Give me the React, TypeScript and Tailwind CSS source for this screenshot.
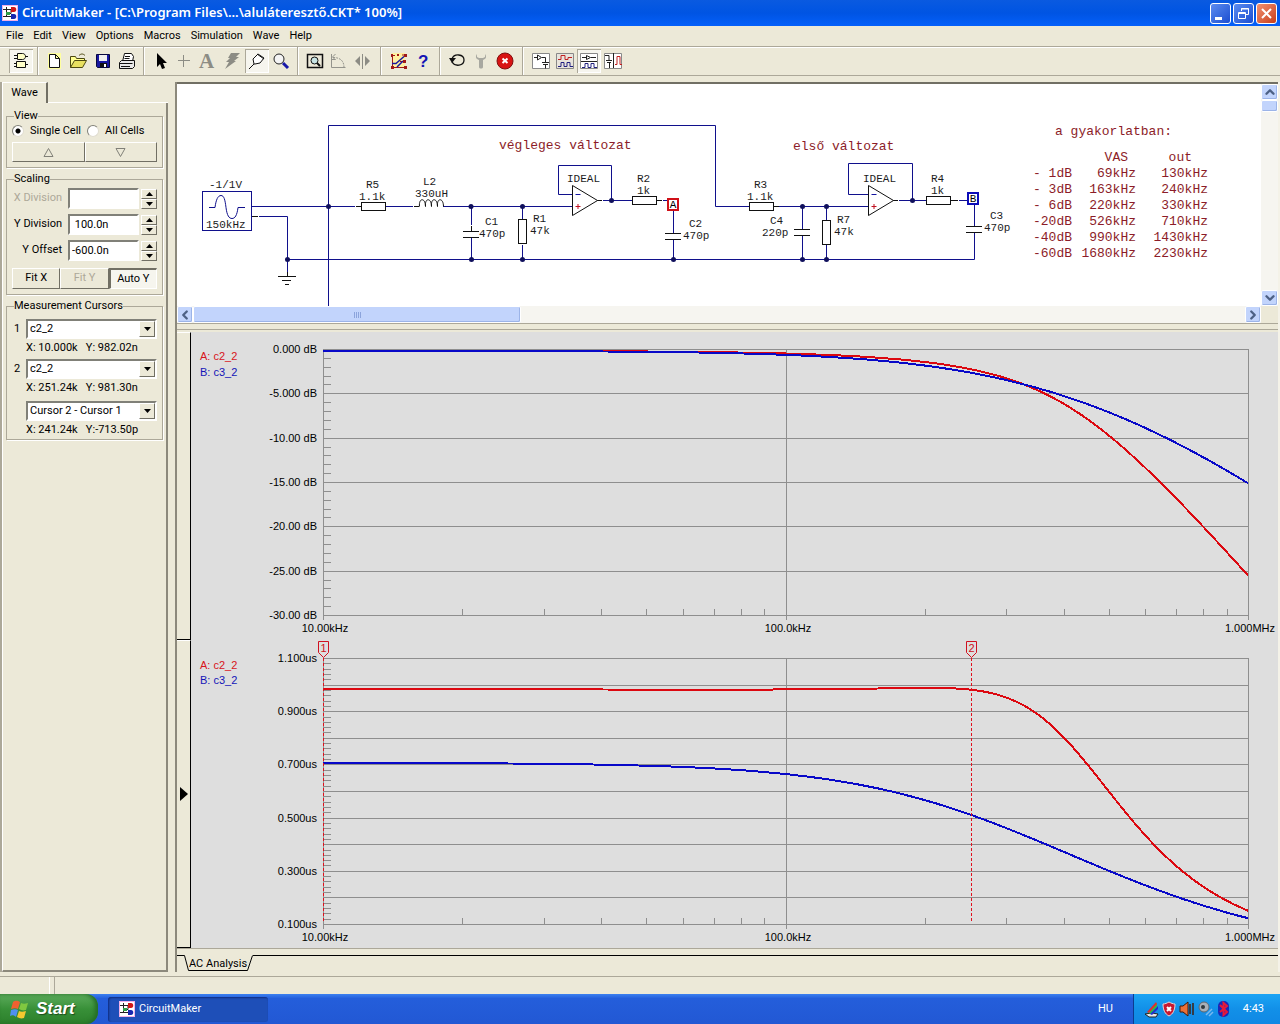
import React, { useState } from 'react';
import { ChevronDown, ChevronLeft, ChevronRight, ChevronUp } from 'lucide-react';

/* ---------- circuit maths ---------- */

type Filter = { r: number; l: number; c: number };

const R_LOAD = 47e3;
const R_OUT = 1e3;
const C_OUT = 470e-12;

const filterA: Filter = { r: 1100, l: 330e-6, c: 470e-12 };
const filterB: Filter = { r: 1100, l: 0, c: 220e-12 };

const denominator = ({ r, l, c }: Filter, w: number) => ({
  re: 1 + r / R_LOAD - w * w * l * c,
  im: w * (r * c + l / R_LOAD),
});

const gainDb = (f: Filter, hz: number) => {
  const w = 2 * Math.PI * hz;
  const d = denominator(f, w);
  return -20 * Math.log10(Math.hypot(d.re, d.im) * Math.hypot(1, w * R_OUT * C_OUT));
};

const phase = (f: Filter, w: number) => {
  const d = denominator(f, w);
  return Math.atan2(d.im, d.re) + Math.atan(w * R_OUT * C_OUT);
};

// group delay in microseconds
const delayUs = (f: Filter, hz: number) => {
  const w = 2 * Math.PI * hz;
  const dw = w * 0.001;
  return ((phase(f, w + dw) - phase(f, w - dw)) / (2 * dw)) * 1e6;
};

/* ---------- plots ---------- */

const LEFT = 132;
const WIDTH = 925;
const HEIGHT = 266;

const freqToX = (hz: number) => LEFT + (Math.log10(hz / 1e4) / 2) * WIDTH;

type PlotProps = {
  top: number;
  legendY: number[];
  labels: string[];
  rows: number;
  minor: number;
  max: number;
  min: number;
  value: (f: Filter, hz: number) => number;
  cursors?: { id: string; hz: number }[];
};

function Plot({ top, legendY, labels, rows, minor, max, min, value, cursors = [] }: PlotProps) {
  const bottom = top + HEIGHT;
  const rowY = (i: number, n: number) => Math.round(top + (i * HEIGHT) / n) + 0.5;

  const trace = (f: Filter) =>
    Array.from({ length: 186 }, (_, i) => {
      const hz = 1e4 * Math.pow(10, (i / 185) * 2);
      const y = top + ((max - value(f, hz)) / (max - min)) * HEIGHT;
      return `${freqToX(hz).toFixed(1)},${y.toFixed(1)}`;
    }).join(' ');

  const ticks = [1e4, 1e5].flatMap((d) => [2, 3, 4, 5, 6, 7, 8, 9].map((k) => d * k));
  const dashes = Array.from({ length: Math.floor(HEIGHT / 5) }, (_, i) => top + i * 5);

  return (
    <svg viewBox="0 0 1087 308" className="block w-full bg-[#dedede] font-['Liberation_Sans',Arial,sans-serif] text-[11px]">
      <text x="9" y={legendY[0]} fill="#d8141c">A: c2_2</text>
      <text x="9" y={legendY[1]} fill="#1414b8">B: c3_2</text>

      <g stroke="#8e8e8e" fill="none" shapeRendering="crispEdges">
        {Array.from({ length: rows + 1 }, (_, i) => (
          <path key={i} d={`M${LEFT} ${rowY(i, rows)}H${LEFT + WIDTH}`} />
        ))}
        {Array.from({ length: rows * minor }, (_, i) => (
          <path key={i} d={`M${LEFT} ${rowY(i, rows * minor)}h8`} />
        ))}
        {[0, 463, WIDTH].map((x) => (
          <path key={x} d={`M${LEFT + x + 0.5} ${top}V${bottom + 5}`} />
        ))}
        {ticks.map((hz) => (
          <path key={hz} d={`M${Math.round(freqToX(hz)) + 0.5} ${bottom}v-6`} />
        ))}
      </g>

      {labels.map((label, i) => (
        <text key={label} x="126" y={rowY(i, labels.length - 1) + 3.5} textAnchor="end">{label}</text>
      ))}
      <text x="134" y={bottom + 17} textAnchor="middle">10.00kHz</text>
      <text x="597" y={bottom + 17} textAnchor="middle">100.0kHz</text>
      <text x="1059" y={bottom + 17} textAnchor="middle">1.000MHz</text>

      <polyline points={trace(filterA)} fill="none" stroke="#dc0810" strokeWidth="2" shapeRendering="crispEdges" />
      <polyline points={trace(filterB)} fill="none" stroke="#0808c8" strokeWidth="2" shapeRendering="crispEdges" />

      {cursors.map(({ id, hz }) => {
        const x = Math.round(freqToX(hz));
        return (
          <g key={id}>
            {dashes.map((y) => (
              <rect key={y} x={x} y={y} width="1" height="3" fill="#e0101c" />
            ))}
            <path d={`M${x - 4.5} ${top - 16.5}h10v11l-5 5l-5-5z`} fill="none" stroke="#d01020" />
            <text x={x + 0.5} y={top - 6} textAnchor="middle" fill="#d01020">{id}</text>
          </g>
        );
      })}
    </svg>
  );
}

/* ---------- schematic ---------- */

const schematicLabels: [number, number, string][] = [
  [209, 188, '-1/1V'], [206, 228, '150kHz'],
  [366, 188, 'R5'], [359, 200, '1.1k'],
  [423, 185, 'L2'], [415, 197, '330uH'],
  [485, 225, 'C1'], [479, 237, '470p'],
  [533, 222, 'R1'], [530, 234, '47k'],
  [567, 182, 'IDEAL'], [637, 182, 'R2'], [637, 194, '1k'],
  [689, 227, 'C2'], [683, 239, '470p'],
  [754, 188, 'R3'], [747, 200, '1.1k'],
  [770, 224, 'C4'], [762, 236, '220p'],
  [837, 223, 'R7'], [834, 235, '47k'],
  [863, 182, 'IDEAL'], [931, 182, 'R4'], [931, 194, '1k'],
  [990, 219, 'C3'], [984, 231, '470p'],
];

const nodes: [number, number][] = [
  [328.5, 206.5], [471, 206.5], [522.5, 206.5], [802.5, 206.5], [826.5, 206.5],
  [611.5, 200.5], [912.5, 200.5], [287.5, 259.5], [471.5, 259.5], [522.5, 259.5],
  [673.5, 259.5], [802.5, 259.5], [826.5, 259.5],
];

function OpAmp({ x }: { x: number }) {
  return (
    <g fill="none">
      <path d={`M${x} 185.5v30l25-15z`} stroke="#111" fill="#fff" />
      <path d={`M${x + 3} 194.5h5`} stroke="#1414a0" />
      <path d={`M${x + 3} 206.5h5M${x + 5.5} 204v5`} stroke="#c01020" />
    </g>
  );
}

function Schematic() {
  return (
    <svg viewBox="177 84 1084 222" className="block h-[222px] w-[1084px] shrink-0 font-['Liberation_Mono','Courier_New',monospace] text-[11px]">
      <g fill="none" stroke="#10108c">
        <path d="M328.5 306V125.5H715.5V206.5H749" />
        <path d="M251 206.5H355M386 206.5H413M443 206.5H572M774 206.5H868" />
        <path d="M259 216.5H287.5V259.5H974.5V233M287.5 259V273" />
        <path d="M471.5 206V225M471.5 238V259M522.5 206V219M522.5 245V259" />
        <path d="M572 194.5H558.5V165.5H611.5V200.5M603 200.5H632M663 200.5h5" />
        <path d="M673.5 210V233M673.5 240V259M802.5 206V229M802.5 236V259M826.5 206V220M826.5 245V259" />
        <path d="M868 194.5H848.5V163.5H912.5V200.5M899 200.5H926M959 200.5h8M974.5 205V226" />
        <rect x="202.5" y="191.5" width="49" height="39" />
        <path d="M209 207.5h6c1-8 3-12 6-12s4 4 5 12s3 11 6 11s5-3 6-11h7" />
      </g>
      <g fill="none" stroke="#111">
        <path d="M252 216.5h6M356 206.5h5M414 206.5h5M597 200.5h5M656 200.5h6M893 200.5h5M951 200.5h7M774 206.5h5" />
        <path d="M419.5 206.5c-1-9 6-9 6 0c-1-9 6-9 6 0c-1-9 6-9 6 0c-1-9 6-9 6 0" />
        <path d="M471.5 226v5M463 231.5h16M463 237.5h16M665 233.5h16M665 239.5h16M794 229.5h16M794 235.5h16M966 226.5h16M966 232.5h16" />
        <path d="M287.5 272v4M278 276.5h18M282 280.5h9M285 284.5h4" />
        <g fill="#fff">
          <rect x="361.5" y="202.5" width="24" height="8" />
          <rect x="632.5" y="196.5" width="24" height="8" />
          <rect x="749.5" y="202.5" width="24" height="8" />
          <rect x="926.5" y="196.5" width="24" height="8" />
          <rect x="518.5" y="219.5" width="8" height="24" />
          <rect x="822.5" y="220.5" width="8" height="24" />
        </g>
      </g>
      <OpAmp x={572.5} />
      <OpAmp x={868.5} />
      {nodes.map(([x, y]) => (
        <circle key={`${x}-${y}`} cx={x} cy={y} r="2.5" fill="#10105c" />
      ))}
      <g strokeWidth="2" fill="#fff">
        <rect x="668" y="199" width="10" height="11" stroke="#d01018" />
        <rect x="968" y="193" width="10" height="11" stroke="#0c0cb8" />
      </g>
      <g textAnchor="middle">
        <text x="673" y="208">A</text>
        <text x="973" y="202">B</text>
      </g>
      <g fill="#1c1c1c">
        {schematicLabels.map(([x, y, label]) => (
          <text key={`${x}-${y}`} x={x} y={y}>{label}</text>
        ))}
      </g>
      <g fill="#8c1c28" className="text-[13px]">
        <text x="499" y="149">végleges változat</text>
        <text x="793" y="150">első változat</text>
        <text x="1055" y="135">a gyakorlatban:</text>
      </g>
    </svg>
  );
}

const measured = [
  ['- 1dB', '69kHz', '130kHz'],
  ['- 3dB', '163kHz', '240kHz'],
  ['- 6dB', '220kHz', '330kHz'],
  ['-20dB', '526kHz', '710kHz'],
  ['-40dB', '990kHz', '1430kHz'],
  ['-60dB', '1680kHz', '2230kHz'],
];

function MeasuredTable() {
  return (
    <table className="absolute top-[66px] left-[851px] text-right font-['Liberation_Mono','Courier_New',monospace] text-[13px] leading-4 whitespace-pre text-[#8c1c28]">
      <thead>
        <tr>
          <th className="w-11" />
          <th className="w-16 p-0 pr-2 font-normal">VAS</th>
          <th className="w-[72px] p-0 pr-4 font-normal">out</th>
        </tr>
      </thead>
      <tbody>
        {measured.map(([level, vas, out]) => (
          <tr key={level}>
            <td className="p-0">{level}</td>
            <td className="p-0">{vas}</td>
            <td className="p-0">{out}</td>
          </tr>
        ))}
      </tbody>
    </table>
  );
}

/* ---------- icons ---------- */

function AppIcon() {
  return (
    <svg viewBox="0 0 16 16" className="size-4 shrink-0">
      <path d="M0 0h16v16H0z" fill="#f0b0e8" />
      <path d="M1 1h14v14H1z" fill="#fff" />
      <path d="M1 4.500h8M4.500 2v10M1 11.500h8M9 4.500v4H5" stroke="#222" fill="none" />
      <path d="M9 2h3c3 0 3 5 0 5H9z" fill="#d01818" />
      <path d="M9 9h3c3 0 3 5 0 5H9z" fill="#1828b0" />
      <path d="M4 7h4v3H4z" fill="#30a048" />
    </svg>
  );
}

const icons: Record<string, React.ReactNode> = {
  Devices: (
    <g fill="#ffffc8" stroke="#111">
      <path d="M8.500 4.500h5c4 0 4 6 0 6h-5zM5 6.500h3M5 9.500h3M16 7.500h3M7.500 12.500h9v6h-9zM5 14.500h2M5 17.500h2M17 15.500h2" />
    </g>
  ),
  New: (
    <>
      <path d="M5 4h13v16H5z" fill="#ffffa0" />
      <path d="M6.500 5.500h6l4 4v9h-10zM12.500 5.500v4h4" fill="#fff" stroke="#111" />
    </>
  ),
  Open: (
    <g stroke="#4c4810">
      <path d="M3.500 18.500v-11h5l1 2h8v2" fill="#ffff90" />
      <path d="M3.500 18.500l4-7h12l-4 7z" fill="#e8e060" />
      <path d="M12 6.500c2-2 4-2 6 0" fill="none" />
    </g>
  ),
  Save: (
    <>
      <path d="M5.500 5.500h13v13h-12l-1-1z" fill="#1818a0" stroke="#080840" />
      <path d="M8 6h8v6H8z" fill="#f0f0f0" />
      <path d="M9 14h7v4H9z" fill="#111" />
      <path d="M13 15h2v3h-2z" fill="#fff" />
    </>
  ),
  Print: (
    <g stroke="#111" fill="#e8e8e8">
      <path d="M7.500 12.500l2-8h7l2 3-1 5z" fill="#fff" />
      <path d="M10 7.500h5M9.500 9.500h5" />
      <path d="M4.500 13.500l2-2h13v6l-2 2h-13zM4.500 14.500h13M6 17.500h9" />
    </g>
  ),
  Select: <path d="M8 4v14l3-3 2 5 3-1-2-5h4z" fill="#000" />,
  Wire: <path d="M10.500 6v12M5 11.500h12" stroke="#8c8c84" fill="none" />,
  Text: (
    <text x="2" y="19" fill="#8c8c84" fontWeight="bold" className="font-['Liberation_Serif',serif] text-[21px]">A</text>
  ),
  Delete: <path d="M10 4h9l-4 4h3l-5 4h2l-11 8 4-7H5l4-4H7z" fill="#8c8c84" />,
  Probe: (
    <g stroke="#111" fill="#fff">
      <path d="M4 20l5-5M9 15l-1-5 5-5 6 4-4 5-5 1zM12 5l7 5" />
    </g>
  ),
  Magnify: (
    <>
      <circle cx="10" cy="10" r="5" fill="#f4f4f4" stroke="#222" />
      <path d="M14 14l5 5" stroke="#1818a8" strokeWidth="3" />
    </>
  ),
  Fit: (
    <g fill="none" stroke="#111">
      <path d="M4.500 5.500h15v13h-15z" strokeWidth="1.5" />
      <circle cx="11.500" cy="11.500" r="3.500" fill="#c8e4e4" />
      <path d="M14 14l3 3" strokeWidth="2" />
    </g>
  ),
  Rotate: (
    <g fill="none" stroke="#94948c">
      <path d="M4.500 5v13.500h14M4.500 10.500h4M8.500 5l-3 3 3 3" />
      <path d="M6 8.500c8 0 11 4 11 10" strokeDasharray="2 1" />
    </g>
  ),
  Mirror: (
    <>
      <path d="M9 7v10l-5-5zM14 7v10l5-5z" fill="#8c8c84" />
      <path d="M11.500 5v15" stroke="#8c8c84" />
    </>
  ),
  Trace: (
    <>
      <path d="M5 4h13v14H5z" fill="#fff0a0" />
      <path d="M4 6.500h4M5.500 6v12M15 6h4M9 18.500h10M5 18.500h4M13 12.500h5" stroke="#a01818" fill="none" />
      <path d="M5 14.500h4l8-7M10 18l6-6" stroke="#1818a0" strokeWidth="1.5" fill="none" />
      <path d="M4 5h2v3H4zM17 5h3v3h-3zM16 11h3v3h-3zM17 17h3v3h-3zM4 17h3v3H4zM10 5h2v2h-2z" fill="#a01818" />
    </>
  ),
  Help: (
    <text x="7" y="18" fill="#1414b4" fontWeight="bold" className="font-['Liberation_Sans',sans-serif] text-[17px]">?</text>
  ),
  Reset: (
    <>
      <path d="M7 10c2-6 12-5 12 1c0 6-9 7-12 2" fill="none" stroke="#111" strokeWidth="1.3" />
      <path d="M4 9h7l-4 5z" fill="#111" />
    </>
  ),
  Options: (
    <path d="M8 5c-2 3-1 5 2 6v7c0 2 4 2 4 0v-7c3-1 4-3 2-6v3l-2 1h-4L8 8z" fill="#a8a8a0" />
  ),
  Stop: (
    <>
      <circle cx="12" cy="12" r="8" fill="#d81414" stroke="#801010" />
      <path d="M9.500 9.500l5 4.500M14.500 9.500l-5 4.500" stroke="#fff" strokeWidth="2" />
    </>
  ),
  Circuit: (
    <g fill="#fff" stroke="#222">
      <path d="M3.500 4.500h17v15h-17z" stroke="#888" />
      <path d="M5 8.500h3M8.500 6v5l4-2.500zM13 8.500h3.500v5M13 13.500h7M14 15.500h5M16.500 15.500v4" />
    </g>
  ),
  Waveforms: (
    <g fill="none">
      <path d="M3.500 4.500h17v15h-17z" stroke="#888" fill="#e8e4dc" />
      <path d="M5 10.500h3v-4h4v4h3v-2h4" stroke="#c02020" />
      <path d="M5 17.500h3v-4h3v4h3v-4h3v4h3" stroke="#202080" />
    </g>
  ),
  'Split horizontal': (
    <g fill="none" stroke="#222">
      <path d="M3.500 4.500h17v15h-17z" stroke="#888" fill="#fff" />
      <path d="M4 12.500h16M5 8.500h4M9.500 6.500v4l4-2zM14 8.500h5" />
      <path d="M5 18.500h3v-4h3v4h3v-4h3v4h3" stroke="#202080" />
    </g>
  ),
  'Split vertical': (
    <g fill="none" stroke="#222">
      <path d="M3.500 4.500h17v15h-17z" stroke="#888" fill="#fff" />
      <path d="M12.500 4v15M4 6.500h4v5M5 11.500h6M6 13.500h4M8.500 13v6" />
      <path d="M14 15.500h2v-8h3v8h2" stroke="#c02020" />
    </g>
  ),
};

const toolbarGroups: { names: string[]; sep: string }[] = [
  { names: ['Devices'], sep: 'w-2.5' },
  { names: ['New', 'Open', 'Save', 'Print'], sep: 'w-2.5' },
  { names: ['Select', 'Wire', 'Text', 'Delete', 'Probe', 'Magnify'], sep: 'w-2.5' },
  { names: ['Fit', 'Rotate', 'Mirror'], sep: 'w-3' },
  { names: ['Trace', 'Help'], sep: 'w-2.5' },
  { names: ['Reset', 'Options', 'Stop'], sep: 'w-3' },
  { names: ['Circuit', 'Waveforms', 'Split horizontal', 'Split vertical'], sep: '' },
];

const pressed = ['Devices', 'Probe', 'Split horizontal'];

/* ---------- window chrome ---------- */

const menu = ['File', 'Edit', 'View', 'Options', 'Macros', 'Simulation', 'Wave', 'Help'];

const uiFont = "font-['Roboto',Tahoma,sans-serif]";
const raised = 'border border-t-white border-l-white border-r-[#716f64] border-b-[#716f64] bg-[#ece9d8]';
const sunken = 'border-2 border-t-[#808078] border-l-[#808078] border-r-white border-b-white';

function TitleBar() {
  return (
    <header className="flex h-[26px] items-center bg-linear-to-b from-[#0a5ae0] via-[#0054e3] to-[#0560fa] pr-[3px] pl-0.5">
      <AppIcon />
      <h1 className="ml-1 flex-1 font-['Noto_Sans',sans-serif] text-[13px] font-semibold whitespace-pre text-white">
        CircuitMaker - [C:\Program Files\...\aluláteresztő.CKT* 100%]
      </h1>
      <div className="flex gap-0.5">
        <button aria-label="Minimize" className="size-[21px] rounded-[3px] border border-white bg-linear-to-br from-[#5c8cf0] to-[#1c4cd0]">
          <svg viewBox="0 0 19 19"><path d="M4 13h7v3H4z" fill="#fff" /></svg>
        </button>
        <button aria-label="Restore" className="size-[21px] rounded-[3px] border border-white bg-linear-to-br from-[#5c8cf0] to-[#1c4cd0]">
          <svg viewBox="0 0 19 19" fill="none" stroke="#fff">
            <path d="M7.500 7V4.500h7v6H12M7 5h8M4.500 8.500h7v6h-7zM4 9.500h8" />
          </svg>
        </button>
        <button aria-label="Close" className="size-[21px] rounded-[3px] border border-white bg-linear-to-br from-[#f09070] to-[#c83c14]">
          <svg viewBox="0 0 19 19"><path d="M5 5l9 9M14 5l-9 9" stroke="#fff" strokeWidth="2" /></svg>
        </button>
      </div>
    </header>
  );
}

function Toolbar() {
  return (
    <div className="flex h-[30px] items-center border-t border-b border-t-[#aca899] border-b-[#aca899] pl-[9px] shadow-[inset_0_1px_0_#fff]">
      {toolbarGroups.map(({ names, sep }) => (
        <React.Fragment key={names[0]}>
          {names.map((name) => (
            <button
              key={name}
              aria-label={name}
              className={`size-6 ${pressed.includes(name) ? 'bg-[#f6f5ee] shadow-[inset_1px_1px_0_#aca899,inset_-1px_-1px_0_#fff]' : ''}`}
            >
              <svg viewBox="0 0 24 24" className="size-6">{icons[name]}</svg>
            </button>
          ))}
          {sep && (
            <div className={`${sep} flex h-7 justify-center`}>
              <div className="w-0.5 border-r border-l border-r-white border-l-[#aca899]" />
            </div>
          )}
        </React.Fragment>
      ))}
    </div>
  );
}

/* ---------- side panel ---------- */

function Group({ title, children }: { title: string; children: React.ReactNode }) {
  return (
    <fieldset className="mx-[3px] mb-[5px] min-w-0 border border-[#aca899] px-[5px] pb-[5px] shadow-[1px_1px_0_#fff] last:pb-0">
      <legend className="ml-0.5 leading-3">{title}</legend>
      {children}
    </fieldset>
  );
}

function Spinner({ label, value, disabled }: { label: string; value: string; disabled?: boolean }) {
  const id = label.replace(' ', '-').toLowerCase();
  return (
    <div className="flex h-[21px] items-center">
      <label htmlFor={id} className={`flex-1 pr-1.5 text-right whitespace-nowrap ${disabled ? 'text-[#aca899]' : ''}`}>{label}</label>
      <input id={id} defaultValue={value} disabled={disabled} className={`h-[21px] w-[71px] shrink-0 bg-white px-0.5 ${sunken}`} />
      <div className="ml-0.5 flex w-4 shrink-0 flex-col">
        <button aria-label={`${label} up`} className={`flex h-2.5 items-center justify-center ${raised}`}>
          <svg viewBox="0 0 7 4" className="h-1 w-[7px]"><path d="M0 4h7L3.500 0z" /></svg>
        </button>
        <button aria-label={`${label} down`} className={`flex h-2.5 items-center justify-center ${raised}`}>
          <svg viewBox="0 0 7 4" className="h-1 w-[7px]"><path d="M0 0h7L3.500 4z" /></svg>
        </button>
      </div>
    </div>
  );
}

function Combo({ label, options }: { label: string; options: string[] }) {
  return (
    <div className="relative flex-1">
      <select aria-label={label} className={`block h-5 w-full appearance-none bg-white pl-0.5 ${sunken}`}>
        {options.map((o) => <option key={o}>{o}</option>)}
      </select>
      <span className={`pointer-events-none absolute top-0.5 right-0.5 flex h-4 w-4 items-center justify-center ${raised}`}>
        <svg viewBox="0 0 7 4" className="h-1 w-[7px]"><path d="M0 0h7L3.500 4z" /></svg>
      </span>
    </div>
  );
}

function Readout({ children }: { children: string }) {
  return <p className="pl-3.5 leading-[18px] whitespace-pre">{children}</p>;
}

function SidePanel() {
  const [cell, setCell] = useState('Single Cell');

  return (
    <aside className={`flex w-[168px] shrink-0 flex-col border-l-2 border-l-[#aca899] text-[11px] ${uiFont}`}>
      <div className="flex h-[21px] items-end">
        <button className="h-[21px] w-[46px] border-t border-r-2 border-l border-t-white border-r-[#716f64] border-l-white">Wave</button>
        <div className="flex-1 border-b border-white" />
      </div>
      <div className="flex-1 border-r-2 border-b-2 border-l border-r-[#8c897c] border-b-[#8c897c] border-l-white pt-[7px]">
        <Group title="View">
          <div className="flex h-[18px] items-center">
            {['Single Cell', 'All Cells'].map((name) => (
              <label key={name} className="mr-1.5 flex items-center gap-1.5 whitespace-nowrap">
                <input
                  type="radio"
                  name="cell"
                  checked={cell === name}
                  onChange={() => setCell(name)}
                  className="size-3 appearance-none rounded-full border border-t-[#808078] border-r-[#e0ddd0] border-b-[#e0ddd0] border-l-[#808078] bg-white checked:bg-[radial-gradient(circle,#000_2px,#fff_3px)]"
                />
                {name}
              </label>
            ))}
          </div>
          <div className="mt-0.5 flex h-5">
            {['up', 'down'].map((dir) => (
              <button key={dir} aria-label={`Move ${dir}`} className={`flex flex-1 items-center justify-center ${raised}`}>
                <svg viewBox="0 0 11 9" className="h-[9px] w-[11px]" fill="none" stroke="#808078">
                  <path d={dir === 'up' ? 'M1 8.500h9L5.500.5z' : 'M1 .5h9L5.500 8.500z'} />
                </svg>
              </button>
            ))}
          </div>
        </Group>

        <Group title="Scaling">
          <div className="mt-[3px] flex flex-col gap-[5px]">
            <Spinner label="X Division" value="" disabled />
            <Spinner label="Y Division" value=" 100.0n" />
            <Spinner label="Y Offset" value="-600.0n" />
          </div>
          <div className="mt-[7px] grid h-[21px] grid-cols-3">
            <button className={raised}>Fit X</button>
            <button disabled className={`text-[#aca899] ${raised}`}>Fit Y</button>
            <button className="border border-t-2 border-l-2 border-t-[#716f64] border-r-white border-b-white border-l-[#716f64] bg-[#f6f5ee]">Auto Y</button>
          </div>
        </Group>

        <Group title="Measurement Cursors">
          <div className="mt-[7px] flex items-center"><span className="w-3.5 pl-0.5">1</span><Combo label="Cursor 1" options={['c2_2', 'c3_2']} /></div>
          <Readout>X: 10.000k   Y: 982.02n</Readout>
          <div className="mt-0.5 flex items-center"><span className="w-3.5 pl-0.5">2</span><Combo label="Cursor 2" options={['c2_2', 'c3_2']} /></div>
          <Readout>X: 251.24k   Y: 981.30n</Readout>
          <div className="mt-1 flex pl-3.5"><Combo label="Difference" options={['Cursor 2 - Cursor 1', 'Cursor 1 - Cursor 2']} /></div>
          <Readout>X: 241.24k   Y:-713.50p</Readout>
        </Group>
      </div>
    </aside>
  );
}

/* ---------- workspace ---------- */

const scrollButton = 'flex shrink-0 items-center justify-center rounded-[2px] border border-white bg-[#c2d4fc] text-[#4d6185] shadow-[inset_-1px_-1px_0_#9cb4e8]';

function SchematicPane() {
  return (
    <section className="border-t-2 border-b border-t-[#716f64] border-b-[#aca899]">
      <div className="flex">
        <div className="relative flex min-w-0 flex-1 overflow-hidden bg-white">
          <Schematic />
          <MeasuredTable />
        </div>
        <div className="flex w-[17px] flex-col bg-[#f6f5f0]">
          <button aria-label="Scroll up" className={`h-4 w-full ${scrollButton}`}><ChevronUp className="size-3.5" strokeWidth={4} /></button>
          <div className={`h-3 w-full ${scrollButton}`} />
          <div className="flex-1" />
          <button aria-label="Scroll down" className={`h-4 w-full ${scrollButton}`}><ChevronDown className="size-3.5" strokeWidth={4} /></button>
        </div>
      </div>
      <div className="flex h-[17px]">
        <div className="flex flex-1 bg-[#f6f5f0]">
          <button aria-label="Scroll left" className={`w-4 ${scrollButton}`}><ChevronLeft className="size-3.5" strokeWidth={4} /></button>
          <div className={`w-[30.3%] gap-px ${scrollButton}`}>
            {[0, 1, 2, 3].map((i) => <i key={i} className="h-1.5 w-px bg-[#8ca4dc]" />)}
          </div>
          <div className="flex-1" />
          <button aria-label="Scroll right" className={`w-4 ${scrollButton}`}><ChevronRight className="size-3.5" strokeWidth={4} /></button>
        </div>
        <div className="w-[17px]" />
      </div>
    </section>
  );
}

function Cell({ active, children }: { active?: boolean; children: React.ReactNode }) {
  return (
    <div className="flex">
      <button aria-label="Select cell" className="flex w-3.5 shrink-0 items-center justify-center border-t border-r border-b border-t-white border-r-black border-b-black">
        {active && <svg viewBox="0 0 8 14" className="h-3.5 w-2"><path d="M0 0v14l8-7z" /></svg>}
      </button>
      <div className="min-w-0 flex-1">{children}</div>
    </div>
  );
}

function Workspace() {
  return (
    <main className="flex min-w-0 flex-1 flex-col border-r-2 border-l-2 border-r-[#f4f2e8] border-l-[#8c897c]">
      <SchematicPane />
      <section className="mt-[5px] border-t border-b border-[#aca899] pt-0.5">
        <Cell>
          <Plot
            top={17}
            legendY={[28, 44]}
            labels={['0.000 dB', '-5.000 dB', '-10.00 dB', '-15.00 dB', '-20.00 dB', '-25.00 dB', '-30.00 dB']}
            rows={6}
            minor={5}
            max={0}
            min={-30}
            value={gainDb}
          />
        </Cell>
        <Cell active>
          <Plot
            top={18}
            legendY={[29, 44]}
            labels={['1.100us', '0.900us', '0.700us', '0.500us', '0.300us', '0.100us']}
            rows={10}
            minor={5}
            max={1.1}
            min={0.1}
            value={delayUs}
            cursors={[{ id: '1', hz: 1e4 }, { id: '2', hz: 251240 }]}
          />
        </Cell>
      </section>
      <div className="flex pt-1.5">
        <button className={`text-[11px] ${uiFont}`}>
          <svg viewBox="0 0 76 17" className="block h-[17px] w-[76px]">
            <path d="M0 .5h7.500l4 15H70.500l5-15" fill="none" stroke="#000" />
            <text x="12" y="12">AC Analysis</text>
          </svg>
        </button>
        <div className="flex-1 border-t border-black" />
      </div>
    </main>
  );
}

function Taskbar() {
  return (
    <footer className={`flex h-[30px] items-center bg-linear-to-b from-[#3c80f0] via-[#245edb] via-15% to-[#2258d4] text-[11px] text-white ${uiFont}`}>
      <button className="flex h-full w-[98px] items-center gap-1.5 rounded-r-xl bg-linear-to-b from-[#5cac5c] via-[#389038] to-[#2c802c] pl-2.5 shadow-[inset_-3px_0_4px_#246c24]">
        <svg viewBox="0 0 20 20" className="size-5">
          <path d="M3 3c3-2 5-1 7 0l-2 7c-2-1-4-1-7 0z" fill="#f06030" />
          <path d="M11 4c2 1 4 1 7 0l-2 7c-3 1-5 0-7-1z" fill="#80c840" />
          <path d="M1 11c3-1 5-1 7 0l-2 7c-2-2-4-2-6-1z" fill="#5090f0" />
          <path d="M9 12c2 1 4 1 7 0l-2 7c-3 1-5 0-7-1z" fill="#f8c830" />
        </svg>
        <span className="font-['Liberation_Sans',sans-serif] text-[17px] font-bold italic [text-shadow:1px_1px_1px_#1c4c1c]">Start</span>
      </button>
      <button className="ml-2.5 flex h-[25px] w-40 items-center gap-1 rounded-[3px] bg-[#1e4fb8] pl-[11px] shadow-[inset_1px_1px_2px_#102c80]">
        <AppIcon />
        CircuitMaker
      </button>
      <span className="mr-5 ml-auto">HU</span>
      <div className="flex h-full w-[147px] items-center border-l border-[#0c3c90] bg-linear-to-b from-[#1ca4f4] via-[#1290e8] to-[#1088e4] pr-4 pl-2.5">
        <svg viewBox="0 0 86 18" className="h-[18px] w-[86px]">
          <path d="M1 14l4 3h7l2-3-6-1z" fill="#e8e8e8" stroke="#222" />
          <path d="M4 13L13 3v4l-6 7z" fill="#28c048" />
          <path d="M3 12L12 2l1 2-8 9z" fill="#e03030" />
          <path d="M6 14l8-8v3l-6 6z" fill="#2030d0" />
          <path d="M25 2c2 1 4 2 6 2 0 6-2 10-6 12-4-2-6-6-6-12 2 0 4-1 6-2z" fill="#c81830" stroke="#e8d8d8" />
          <path d="M23 7l4 4M27 7l-4 4" stroke="#fff" strokeWidth="2" />
          <path d="M36 6h3l5-4v14l-5-4h-3z" fill="#e87038" stroke="#401808" />
          <path d="M46 4v10M49 3v12" stroke="#402010" strokeWidth="1.5" />
          <circle cx="60" cy="7" r="5" fill="#a8b0b8" stroke="#606870" />
          <circle cx="59" cy="7" r="2" fill="#30383c" />
          <path d="M62 15l6-6M65 16l4-4" stroke="#78b8f0" strokeWidth="1.5" />
          <rect x="74" y="1" width="11" height="16" rx="5" fill="#1828b8" />
          <path d="M76 5l7 7-3.500 3V3L83 6l-7 6" fill="none" stroke="#e81838" strokeWidth="2" />
        </svg>
        <time className="ml-auto">4:43</time>
      </div>
    </footer>
  );
}

export default function App() {
  return (
    <div className="flex min-h-screen flex-col bg-[#ece9d8] text-black">
      <TitleBar />
      <nav className={`flex h-5 items-center text-[11px] ${uiFont}`}>
        {menu.map((item) => (
          <button key={item} className="px-[5px] first:pl-1.5">{item}</button>
        ))}
      </nav>
      <Toolbar />
      <div className="flex flex-1 gap-[7px] pt-1.5 pb-0.5">
        <SidePanel />
        <Workspace />
      </div>
      <div className="mt-0.5 flex h-[18px] gap-1 border-t border-[#aca899]">
        <div className="w-[50px] border-r border-white" />
        <div className="flex-1 border-l border-[#aca899]" />
      </div>
      <Taskbar />
    </div>
  );
}
